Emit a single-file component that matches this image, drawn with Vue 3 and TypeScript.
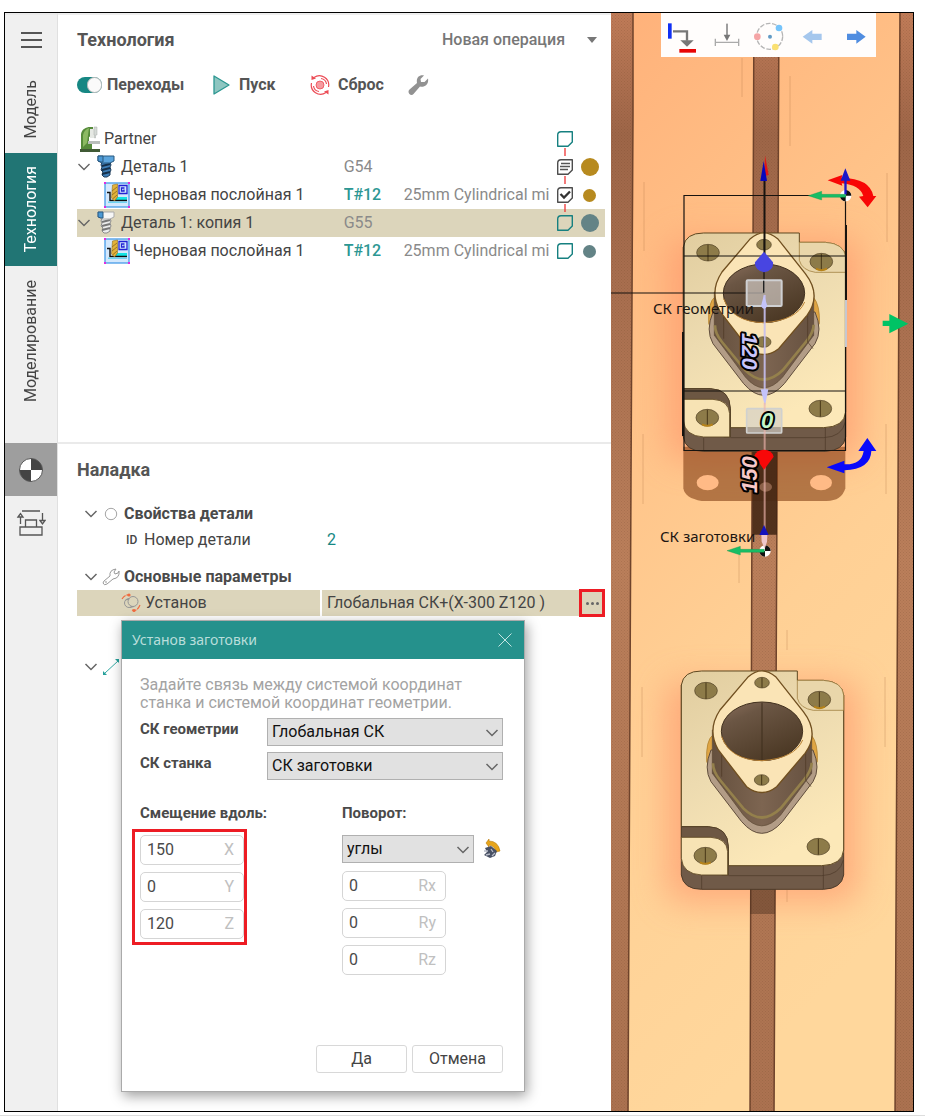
<script setup lang="ts">
import { ref } from 'vue'

type PartKind = 'machine' | 'bolt' | 'boltGhost' | 'mill'
type Mark = 'empty' | 'lines' | 'check'

interface TreeRow {
  id: number
  level: number
  icon: PartKind
  name: string
  code: string
  tool: string
  mark: Mark
  up: boolean
  down: boolean
  dot: string
  selected: boolean
}

const rows: TreeRow[] = [
  { id: 1, level: 0, icon: 'machine', name: 'Partner', code: '', tool: '', mark: 'empty', up: false, down: true, dot: '', selected: false },
  { id: 2, level: 1, icon: 'bolt', name: 'Деталь 1', code: 'G54', tool: '', mark: 'lines', up: true, down: true, dot: 'big gold', selected: false },
  { id: 3, level: 2, icon: 'mill', name: 'Черновая послойная 1', code: 'T#12', tool: '25mm Cylindrical mi', mark: 'check', up: true, down: true, dot: 'gold', selected: false },
  { id: 4, level: 1, icon: 'boltGhost', name: 'Деталь 1: копия 1', code: 'G55', tool: '', mark: 'empty', up: true, down: false, dot: 'big slate', selected: true },
  { id: 5, level: 2, icon: 'mill', name: 'Черновая послойная 1', code: 'T#12', tool: '25mm Cylindrical mi', mark: 'empty', up: false, down: false, dot: 'slate', selected: false },
]

const shifts = ref([
  { axis: 'X', value: '150' },
  { axis: 'Y', value: '0' },
  { axis: 'Z', value: '120' },
])
const turns = ref([
  { axis: 'Rx', value: '0' },
  { axis: 'Ry', value: '0' },
  { axis: 'Rz', value: '0' },
])
const geometryCs = ref('Глобальная СК')
const machineCs = ref('СК заготовки')
const turnMode = ref('углы')
const transitions = ref(true)
</script>

<template>
  <div class="page">
    <main class="frame">
      <nav class="rail">
        <div class="rail-top">
          <button class="menu" type="button" aria-label="Меню"><i></i><i></i><i></i></button>
          <button class="tab tab-model" type="button"><span>Модель</span></button>
          <button class="tab tab-tech" type="button"><span>Технология</span></button>
          <button class="tab tab-sim" type="button"><span>Моделирование</span></button>
        </div>
        <div class="rail-bottom">
          <button class="rail-icon active" type="button" aria-label="Наладка">
            <svg width="26" height="26" viewBox="0 0 26 26">
              <circle cx="13" cy="13" r="11.5" fill="#fff" />
              <path d="M13 13V1.500A11.500 11.500 0 0 1 24.500 13ZM13 13V24.500A11.500 11.500 0 0 1 1.500 13Z" fill="#444" />
              <circle cx="13" cy="13" r="11.500" fill="none" stroke="#555" />
            </svg>
          </button>
          <button class="rail-icon" type="button" aria-label="Заготовка">
            <svg width="30" height="28" viewBox="0 0 30 28" fill="none" stroke="#555" stroke-width="1.300">
              <path d="M6 2H24M9.500 18V11H20.500V18M4 18H26V26H4ZM4.500 15V8M26.500 4V12" />
              <path d="M2 8L4.500 4.500L7 8ZM24 11.500L26.500 15L29 11.500Z" />
            </svg>
          </button>
        </div>
      </nav>

      <div class="panels">
        <section class="tech">
          <header class="head">
            <h1>Технология</h1>
            <button class="new-op" type="button">Новая операция <i class="caret"></i></button>
          </header>
          <div class="tools">
            <label class="tool tool-a"><input v-model="transitions" type="checkbox" class="switch" />Переходы</label>
            <button class="tool tool-b" type="button">
              <svg width="18" height="22" viewBox="0 0 18 22"><path d="M1 2L16 11L1 20Z" fill="#8ec6c1" stroke="#2c9791" stroke-width="1.300" stroke-linejoin="round" /></svg>
              Пуск
            </button>
            <button class="tool tool-c" type="button">
              <svg width="20" height="22" viewBox="0 0 20 22" fill="none" stroke="#ec4b55" stroke-width="1.200">
                <circle cx="10" cy="11" r="4" fill="#f69ba0" stroke-width=".8" />
                <path d="M4 3.500A9.300 9.300 0 0 1 18.500 13M16 18.500A9.300 9.300 0 0 1 1.500 9M3.500 12A6.500 6.500 0 0 0 9 17.500M16.500 10A6.500 6.500 0 0 0 11 4.500" />
                <path d="M1.500 1.500V6L6 4.500ZM18.500 20.500V16L14 17.500Z" fill="#ec4b55" stroke="none" />
              </svg>
              Сброс
            </button>
            <button class="tool" type="button" aria-label="Настройка">
              <svg width="22" height="22" viewBox="0 0 22 22"><path d="M2.500 15.500L10 9C9 4 12 .5 17 1.500L13.500 5L14 8L17.500 8L21 4.500C22 10 18 13.500 13 12.500L6.500 20C4 23 -.5 18.500 2.500 15.500Z" fill="#929292" /></svg>
            </button>
          </div>

          <ul class="tree">
            <li v-for="row in rows" :key="row.id" class="tree-row" :class="[`level-${row.level}`, { selected: row.selected }]">
              <div class="tree-name">
                <button v-if="row.level === 1" class="twist" type="button" aria-label="Свернуть">
                  <svg width="14" height="10" viewBox="0 0 14 10"><path d="M1.500 2L7 7.500L12.500 2" fill="none" stroke="#666" stroke-width="1.400" /></svg>
                </button>
                <svg v-if="row.icon === 'machine'" class="ico-machine" width="20" height="26" viewBox="0 0 20 26">
                  <path d="M1 23V8C2 3 6 1 10 1H13V9L9 11V17H12V23Z" fill="#568b3b" />
                  <path d="M3 21V9C4 5 6 3 9 2L8 9L7 17Z" fill="#8cba63" />
                  <path d="M10 3H14V12H10Z" fill="#e6e9e4" /><path d="M14 1H17V9H15.500V12H14.500V9H14Z" fill="#d5dad6" stroke="#a8aeaa" stroke-width=".5" />
                  <path d="M8 15H20V18H8Z" fill="#b9bebb" />
                  <path d="M0 23H20V26H0Z" fill="#405a35" />
                </svg>
                <svg v-else-if="row.icon === 'mill'" class="ico-mill" width="26" height="26" viewBox="0 0 26 26">
                  <rect x="1" y="1" width="24" height="24" fill="#d3e8fd" stroke="#459be8" stroke-width="1.300" />
                  <path d="M10 15H23V19H10Z" fill="#14e4e4" />
                  <path d="M3 10.500H6V18.500H23" fill="none" stroke="#111" stroke-width="1.400" /><path d="M4 19.500H23V21H4Z" fill="#6fd4f2" />
                  <path d="M8.500 3L13.500 2V15L10.500 19L7.500 16Z" fill="#e3b23a" stroke="#94701f" stroke-width=".6" />
                  <path d="M8 9L13 5M8 13L13 9M8.500 17L13 13" stroke="#9a7424" />
                  <path d="M20 7.500V9H17.500V6H20.500M15 3.500H23V11.500H15Z" fill="none" stroke="#2222d4" stroke-width="1.300" />
                  <path d="M0 0H2V2H0ZM24 0H26V2H24ZM0 24H2V26H0ZM24 24H26V26H24Z" fill="#e02be0" />
                </svg>
                <svg v-else class="ico-bolt" :class="row.icon" width="18" height="24" viewBox="0 0 18 24">
                  <path class="shank" d="M5 7H13L14 10L13 12L14 15L13 17V20L10 22L7 22L5 20L6 17L4 15L5 12L4 10Z" />
                  <path class="thread" d="M5 11L13 9M5 15L13 13M5 19L13 17" />
                  <path class="cap" d="M1 1H17V6L13 8H5L1 6Z" />
                  <path class="side" d="M1 1H6V7H4L1 6Z" />
                </svg>
                <span>{{ row.name }}</span>
              </div>
              <span class="code" :class="{ tcode: row.level === 2 }">{{ row.code }}</span>
              <span class="toolname">{{ row.tool }}</span>
              <svg class="mark" width="18" height="28" viewBox="0 0 18 28" fill="none">
                <path v-if="row.up" d="M9 0V3" stroke="#e33" stroke-width="1.300" />
                <path v-if="row.down" d="M9 23V28" stroke="#e33" stroke-width="1.300" />
                <path d="M5 6.700H16.300V17L12 21.300H1.700V10Q1.700 6.700 5 6.700Z" :stroke="row.mark === 'empty' ? '#168080' : '#4d4d4d'" stroke-width="1.400" stroke-linejoin="round" />
                <path v-if="row.mark === 'lines'" d="M5 10.500H14M4 13.500H14M4 16.500H12" stroke="#555" stroke-width="1.300" />
                <path v-if="row.mark === 'check'" d="M4.500 13L8 16.500L14 10.500" stroke="#333" stroke-width="2.300" />
              </svg>
              <span class="dot-cell"><i v-if="row.dot" class="dot" :class="row.dot"></i></span>
            </li>
          </ul>
        </section>

        <section class="setup">
          <h2>Наладка</h2>
          <div class="props">
            <div class="prop group">
              <svg class="chev" width="14" height="10" viewBox="0 0 14 10"><path d="M1.500 2L7 7.500L12.500 2" /></svg>
              <svg class="pic" width="18" height="18" viewBox="0 0 18 18"><circle cx="9" cy="9" r="5.700" fill="none" stroke="#a5a5a5" /></svg>
              <span>Свойства детали</span>
            </div>
            <div class="prop item">
              <small>ID</small><span class="prop-name">Номер детали</span><span class="prop-value teal">2</span>
            </div>
            <div class="prop group second">
              <svg class="chev" width="14" height="10" viewBox="0 0 14 10"><path d="M1.500 2L7 7.500L12.500 2" /></svg>
              <svg class="pic" width="18" height="18" viewBox="0 0 18 18"><path d="M2 13L8 8Q7 2 14 1L12 4L13 6L16 5L17 3Q18 10 11 11L5 16Q2 18 1 15ZM4 13V15" fill="none" stroke="#999" /></svg>
              <span>Основные параметры</span>
            </div>
            <div class="prop item chosen">
              <svg class="ico-set" width="20" height="20" viewBox="0 0 20 20" fill="none">
                <circle cx="8" cy="10" r="4.500" stroke="#969696" /><circle cx="12" cy="8.500" r="5" stroke="#969696" fill="#dcd5bb" />
                <path d="M8.500 6L4.500 7M13 13.500L9 14.500" stroke="#969696" />
                <path d="M1 6Q4 1 9 2M19 12Q16 19 11 17" stroke="#f06a3f" stroke-width="1.200" stroke-dasharray="5 1" /><circle cx="8" cy="2" r="1.600" fill="#f06a3f" /><circle cx="13" cy="17.500" r="1.600" fill="#f06a3f" />
              </svg>
              <span class="prop-name">Установ</span>
              <span class="prop-value split">Глобальная СК+(X-300 Z120 )</span>
              <button class="more" type="button" aria-label="Изменить установ"><i></i><i></i><i></i></button>
            </div>
            <div class="prop group third">
              <svg class="chev" width="14" height="10" viewBox="0 0 14 10"><path d="M1.500 2L7 7.500L12.500 2" /></svg>
              <svg class="pic" width="18" height="18" viewBox="0 0 18 18"><path d="M3 15L16 3" stroke="#35aaa4" /><path d="M1 13L5 17L1 17ZM13 1H17V5Z" fill="#25a09a" /></svg>
            </div>
          </div>

          <form class="dialog" role="dialog" aria-labelledby="dialog-title" @submit.prevent>
            <div class="dialog-head">
              <span id="dialog-title">Установ заготовки</span>
              <button type="button" aria-label="Закрыть"><svg width="14" height="14" viewBox="0 0 14 14"><path d="M.5 .5L13.500 13.500M13.500 .5L.5 13.500" stroke="#c4e4e2" /></svg></button>
            </div>
            <div class="dialog-body">
              <p>Задайте связь между системой координат станка и системой координат геометрии.</p>
              <div class="pick">
                <label for="cs-geometry">СК геометрии</label>
                <span class="select"><select id="cs-geometry" v-model="geometryCs"><option>Глобальная СК</option></select><svg class="chev" width="14" height="10" viewBox="0 0 14 10"><path d="M1.500 2L7 7.500L12.500 2" /></svg></span>
              </div>
              <div class="pick">
                <label for="cs-machine">СК станка</label>
                <span class="select"><select id="cs-machine" v-model="machineCs"><option>СК заготовки</option></select><svg class="chev" width="14" height="10" viewBox="0 0 14 10"><path d="M1.500 2L7 7.500L12.500 2" /></svg></span>
              </div>
              <div class="columns">
                <fieldset class="shift">
                  <legend>Смещение вдоль:</legend>
                  <div class="outlined">
                    <label v-for="s in shifts" :key="s.axis" class="field"><input v-model="s.value" type="text" /><span>{{ s.axis }}</span></label>
                  </div>
                </fieldset>
                <fieldset>
                  <legend>Поворот:</legend>
                  <div class="turns">
                    <div class="turn-mode">
                      <span class="select"><select v-model="turnMode" aria-label="Поворот"><option>углы</option></select><svg class="chev" width="14" height="10" viewBox="0 0 14 10"><path d="M1.500 2L7 7.500L12.500 2" /></svg></span>
                      <svg width="18" height="20" viewBox="0 0 18 20">
                        <path d="M3 4L6 0V2Q15 2 17 12L13 13Q12 7 6 6V8Z" fill="#e7a51a" stroke="#b87a0a" stroke-width=".6" />
                        <path d="M2 9L8 7L14 12L12 17L7 19L1 16L4 13Z" fill="#485064" />
                        <path d="M1 12H5M8 10L10 13M3 16L7 15M9 17L12 14" stroke="#b8bcc8" stroke-width="1.300" />
                      </svg>
                    </div>
                    <label v-for="t in turns" :key="t.axis" class="field"><input v-model="t.value" type="text" /><span>{{ t.axis }}</span></label>
                  </div>
                </fieldset>
              </div>
              <div class="actions"><button type="submit">Да</button><button type="button">Отмена</button></div>
            </div>
          </form>
        </section>
      </div>

      <section class="view" aria-label="Рабочая зона">
        <svg class="scene" viewBox="611 13 302 1098" preserveAspectRatio="xMidYMid slice">
          <defs>
            <linearGradient id="table" x1="0" y1="0" x2=".3" y2="1">
              <stop offset="0" stop-color="#ffb079" /><stop offset=".35" stop-color="#ffc288" /><stop offset=".65" stop-color="#ffd095" /><stop offset="1" stop-color="#ffd79c" />
            </linearGradient>
            <linearGradient id="groove" x1="0" y1="0" x2="0" y2="1">
              <stop offset="0" stop-color="#c47e5a" /><stop offset=".12" stop-color="#9e6648" /><stop offset=".5" stop-color="#bb7f5b" /><stop offset="1" stop-color="#ab7250" />
            </linearGradient>
            <linearGradient id="plate" x1="0" y1="0" x2=".5" y2="1">
              <stop offset="0" stop-color="#e1cd9f" /><stop offset=".5" stop-color="#eddbb0" /><stop offset="1" stop-color="#fce8b8" />
            </linearGradient>
            <linearGradient id="bore" x1="0" y1="0" x2=".6" y2="1">
              <stop offset="0" stop-color="#8b6f5c" /><stop offset=".3" stop-color="#6b5644" /><stop offset="1" stop-color="#4c3925" />
            </linearGradient>
            <linearGradient id="skirt" x1="0" y1="0" x2="1" y2="0">
              <stop offset="0" stop-color="#65503e" /><stop offset=".5" stop-color="#7d6551" /><stop offset="1" stop-color="#665140" />
            </linearGradient>
            <pattern id="grain" width="3" height="3" patternUnits="userSpaceOnUse"><path d="M0 0H1V1H0ZM1.500 1.500H2.500V2.500H1.500Z" fill="#5a2f1c" opacity=".16" /></pattern>
            <filter id="glow" x="-40%" y="-30%" width="180%" height="160%"><feGaussianBlur stdDeviation="17" /></filter>
            <g id="part">
              <path d="M229 165V735Q235 778 290 778H655Q710 776 716 735V195Z" fill="#705a48" stroke="#4e3b29" stroke-width="3" />
              <path d="M290 738V778M655 707V778M370 737H650Q705 735 715 690" fill="none" stroke="#4b3827" stroke-width="2" />
              <path d="M229 590V165Q235 123 290 123H577V151H655Q712 155 716 195V660Q712 705 650 707H370V650Q368 592 310 590Z" fill="url(#plate)" stroke="#5d461f" stroke-width="3" />
              <path d="M577 151H655Q712 155 716 195V241H625Q585 235 577 205Z" fill="#e9d6aa" stroke="#93702e" stroke-width="2" />
              <path d="M229 590H310Q370 592 370 650V735H350V640L229 625Z" fill="#6d5743" stroke="#49371f" stroke-width="2" />
              <path d="M229 622H318Q365 625 368 665V735H290Q233 732 229 685Z" fill="#f7e3b4" stroke="#5d461f" stroke-width="2.500" />
              <path d="M324 315Q302 330 305 395L318 420M619 315Q640 340 637 395L620 420" fill="#dfa544" stroke="#a87722" stroke-width="2" />
              <path d="M318 360Q295 415 318 455L410 575Q470 645 532 575L624 455Q648 415 624 360Z" fill="#b29c86" stroke="#604d3b" stroke-width="3" />
              <path d="M322 300V430L415 555Q470 620 527 555L620 430V300Z" fill="url(#skirt)" stroke="#594530" stroke-width="2" />
              <path d="M324 400Q324 425 345 450L415 535Q470 590 527 535L598 448Q620 420 620 398" fill="none" stroke="#94804c" stroke-width="8" />
              <path d="M602 360V450L618 470M350 370V440" fill="none" stroke="#4b3722" stroke-width="2" />
              <path d="M430 140Q470 105 512 140L595 245Q645 310 600 370L515 470Q470 505 425 470L340 360Q305 300 345 240Z" fill="#fae4b6" stroke="#704f20" stroke-width="4" />
              <ellipse cx="471" cy="304" rx="122" ry="88" fill="url(#bore)" stroke="#402f1d" stroke-width="3" />
              <path d="M350 320Q375 390 471 392Q570 385 593 330" fill="none" stroke="#b98235" stroke-width="3" />
              <g fill="#8d7b49" stroke="#514125" stroke-width="2">
                <ellipse cx="471" cy="158" rx="22" ry="16" /><ellipse cx="470" cy="450" rx="22" ry="16" />
                <ellipse cx="303" cy="182" rx="34" ry="25" /><ellipse cx="643" cy="209" rx="34" ry="25" />
                <ellipse cx="640" cy="650" rx="34" ry="25" /><ellipse cx="301" cy="677" rx="34" ry="25" />
              </g>
              <path d="M303 158V207M643 185V233M640 626V674M301 653V701M471 143V173M470 435V465" stroke="#473718" stroke-width="3" />
              <path d="M627 230Q643 239 660 230M285 697Q301 706 317 697" fill="none" stroke="#b78319" stroke-width="6" />
            </g>
            <g id="origin">
              <circle r="17" fill="#fff" /><path d="M0 0V-17A17 17 0 0 1 17 0ZM0 0V17A17 17 0 0 1 -17 0Z" fill="#111" />
            </g>
            <g id="green-arrow"><path d="M-112 0L-72 -13V-4H0V5H-72V13Z" fill="#18bd65" stroke="#0a9249" stroke-width="1" /></g>
          </defs>
          <rect x="600" y="0" width="330" height="1120" fill="url(#table)" />
          <g filter="url(#glow)" fill="#ff9068" opacity=".6">
            <rect x="668" y="240" width="192" height="220" rx="14" /><rect x="666" y="682" width="192" height="220" rx="14" />
          </g>
          <g stroke="#6f432b" stroke-width="1.500">
            <path d="M600 0H633V115L631 480L628 1120H600Z" fill="url(#groove)" />
            <path d="M754 0H779L777 500L774 1120H750L752 500Z" fill="url(#groove)" />
            <path d="M900 0H930V1120H895L898 500Z" fill="url(#groove)" />
          </g>
          <path d="M600 0H633L628 1120H600ZM754 0H779L774 1120H750ZM900 0H930V1120H895Z" fill="url(#grain)" />
          <path d="M742 58V97M790 76V146M887 173V242M644 182V251M643 434V504M886 424V494M642 687V757M885 677V747M787 630V650M787 890V902M739 555V583" stroke="#b57a4b" stroke-width="1" opacity=".35" />
          <g transform="translate(605 380) scale(.33333)">
            <path d="M235 200H721V325Q710 363 665 363H290Q240 355 235 325Z" fill="#7c390f" opacity=".58" />
            <path d="M442 205H516V464H442Z" fill="#432715" opacity=".88" />
            <ellipse cx="308" cy="308" rx="33" ry="23" fill="#ffba86" /><ellipse cx="648" cy="308" rx="33" ry="23" fill="#ffba86" /><ellipse cx="482" cy="321" rx="19" ry="14" fill="#8b6048" />
          </g>
          <path d="M750 889H775V914H750Z" fill="#4b3120" opacity=".45" />
          <use href="#part" transform="translate(605 630) scale(.33333)" />
          <path d="M762 703V760" stroke="#3f2e1c" />
          <use href="#part" transform="translate(607 192) scale(.33333)" />

          <g fill="none" stroke="#17130f">
            <path d="M684 195.500H845.500V450.500H684ZM684 256H845M684 391H845M611 293H764V256" stroke-width="1.200" />
            <path d="M764.500 180V256M846 225V300M683 332V436" stroke-width="2" />
            <path d="M846 300V347" stroke="#c7c7cf" stroke-width="2" />
          </g>
          <g transform="translate(605 0) scale(.33333)">
            <path d="M480 466L491 525L478 528Z" fill="#e21616" /><path d="M476 483L486 543H466Z" fill="#0808bd" />
            <path d="M668 541L712 525L710 533Q795 535 805 588H814L788 622L762 590L775 588Q765 555 710 550L712 557Z" fill="#f80606" />
            <use href="#origin" transform="translate(722 587)" /><use href="#green-arrow" transform="translate(722 587)" />
            <path d="M721 505L736 542H725V583H718V542H707Z" fill="#1b18c9" />
          </g>
          <g transform="translate(605 220) scale(.33333)">
            <rect x="425" y="181" width="105" height="77" rx="3" fill="#e5dfdc" fill-opacity=".6" stroke="#cfd0d2" stroke-width="6" />
            <path d="M476 182V218" stroke="#222" stroke-width="4" />
            <path d="M479 225V510" stroke="#c6bff0" stroke-width="6" opacity=".9" /><path d="M477 224L487 258Q477 275 468 258ZM467 508H490L480 558Z" fill="#c4c3fa" />
            <path d="M477 95L504 127Q507 151 477 157Q448 151 450 127Z" fill="#4845e1" />
            <path d="M833 302H853V282L910 311L853 340V318H833Z" fill="#00c365" />
          </g>
          <g transform="translate(605 380) scale(.33333)">
            <rect x="425" y="86" width="105" height="73" rx="3" fill="#d3d0c8" fill-opacity=".65" stroke="#d0d1cf" stroke-width="5" />
            <path d="M479 68V485" stroke="#edb4ad" stroke-width="6" opacity=".65" />
            <path d="M448 227Q455 209 477 209Q500 209 506 230L477 269Z" fill="#f80808" />
            <path d="M665 262L718 242V253Q770 255 776 213H760L787 174L814 213H799Q797 268 718 271V280Z" fill="#0909fb" />
            <use href="#origin" transform="translate(480 513)" /><use href="#green-arrow" transform="translate(478 512)" />
            <path d="M477 435L491 465H463Z" fill="#1512bd" /><path d="M469 465H487L486 485L479 507L470 485Z" fill="#efc7cb" />
          </g>
          <text class="cs" x="653" y="314">СК геометрии</text>
          <text class="cs" x="660" y="542">СК заготовки</text>
          <text class="dim violet" transform="translate(742 333) rotate(90)">120</text>
          <text class="dim pink" transform="translate(757 493) rotate(-90)">150</text>
          <text class="dim mint" x="761" y="428">0</text>
        </svg>

        <div class="view-tools">
          <button type="button" aria-label="Сместить"><svg viewBox="168 39 129 132"><path d="M189 70H200V116H189Z" fill="#1030f4" /><path d="M204 94H246V122" fill="none" stroke="#777" stroke-width="7" /><path d="M226 121H266L246 140Z" fill="#777" /><path d="M223 147H273V158H223Z" fill="#e80505" /></svg></button>
          <button type="button" aria-label="На плоскость"><svg viewBox="297 39 129 132"><path d="M366 71V110M331 127H401M331 116V138M401 116V138" stroke="#aaa" stroke-width="4" fill="none" /><path d="M366 71V108" stroke="#777" stroke-width="3" /><path d="M356 104H376L366 123Z" fill="#777" /></svg></button>
          <button type="button" aria-label="По окружности"><svg viewBox="426 39 129 132"><circle cx="494" cy="109" r="39" fill="none" stroke="#b5b5b5" stroke-width="4" stroke-dasharray="14 5" /><circle cx="495" cy="110" r="6" fill="#629bc5" /><circle cx="522" cy="84" r="10" fill="#76c4fa" /><circle cx="457" cy="110" r="10" fill="#f5a5a6" /><circle cx="511" cy="141" r="10" fill="#fae071" /></svg></button>
          <button type="button" aria-label="Назад"><svg viewBox="555 39 129 132"><path d="M593 110L622 90V101H650V120H622V131Z" fill="#a5c7ed" /></svg></button>
          <button type="button" aria-label="Вперёд"><svg viewBox="684 39 129 132"><path d="M782 110L754 90V101H726V120H754V131Z" fill="#508de0" /></svg></button>
        </div>
      </section>
    </main>
    <hr class="rule" />
  </div>
</template>

<style>
body {
  background: #fff;
}
</style>

<style scoped>
.page {
  min-height: 100vh;
  box-sizing: border-box;
  padding: 12px 0 3px;
  display: flex;
  flex-direction: column;
  font: 16px/20px Roboto, "Liberation Sans", sans-serif;
  color: #444;
}
.page *,
.page *::before {
  box-sizing: border-box;
}
button,
input,
select {
  font: inherit;
  color: inherit;
}
button {
  padding: 0;
  border: 0;
  background: none;
}
svg {
  display: block;
  flex: none;
}
.rule {
  width: 100%;
  height: 1px;
  margin: 3px 0 0;
  border: 0;
  background: #ddd;
}
.frame {
  flex: 1;
  margin: 0 11px 0 4px;
  border: 1px solid #000;
  display: grid;
  grid-template-columns: 53px minmax(0, 553fr) minmax(0, 302fr);
}
.rail,
.panels {
  display: grid;
  grid-template-rows: 429fr 669fr;
}
.rail {
  background: #f0f0f0;
  border-right: 1px solid #e0e0e0;
  border-top: 2px solid #eaeaea;
}
.rail-top,
.rail-bottom {
  display: flex;
  flex-direction: column;
}
.menu {
  height: 51px;
  padding: 0 0 2px 16px;
  display: flex;
  flex-direction: column;
  justify-content: center;
  gap: 5px;
}
.menu i {
  width: 21px;
  height: 2px;
  background: #555;
}
.tab {
  display: flex;
  align-items: center;
  justify-content: center;
}
.tab span {
  writing-mode: vertical-rl;
  transform: rotate(180deg);
}
.tab-model {
  height: 87px;
}
.tab-tech {
  height: 113px;
  background: #217574;
  color: #fff;
}
.tab-sim {
  height: 151px;
}
.rail-icon {
  height: 53px;
  display: grid;
  place-items: center;
}
.rail-icon.active {
  background: #9e9e9e;
}
.panels {
  background: #fff;
}
.tech {
  padding: 0 6px 0 19px;
  border-top: 2px solid #eee;
}
.setup {
  position: relative;
  border-top: 2px solid #eaeaea;
  padding: 0 6px 0 19px;
}
h1,
h2 {
  margin: 0;
  font-size: 18px;
  line-height: 24px;
  font-weight: 700;
  color: #555;
}
.head {
  display: flex;
  align-items: center;
  justify-content: space-between;
  padding-top: 13px;
}
.new-op {
  display: flex;
  align-items: center;
  gap: 22px;
  padding-right: 8px;
  font-weight: 500;
  color: #777;
}
.caret {
  border: 5px solid transparent;
  border-top: 6px solid #777;
  border-bottom: 0;
}
.tools {
  display: flex;
  align-items: center;
  height: 24px;
  margin-top: 21px;
  font-weight: 700;
  color: #555;
}
.tool {
  display: flex;
  align-items: center;
  gap: 8px;
}
.tool-a {
  gap: 5px;
  width: 136px;
}
.tool-b {
  width: 97px;
}
.tool-c {
  width: 97px;
}
.switch {
  appearance: none;
  width: 25px;
  height: 16px;
  margin: 0;
  border-radius: 8px;
  background: #168783;
  display: flex;
  justify-content: flex-end;
}
.switch::before {
  content: "";
  width: 15px;
  height: 16px;
  border-radius: 8px;
  background: #fafafa;
  border: 1px solid #bbb;
}
.tree {
  list-style: none;
  margin: 28px 0 0;
  padding: 0;
}
.tree-row {
  height: 28px;
  display: grid;
  grid-template-columns: minmax(0, 266fr) 60px minmax(0, 152fr) 19px 30px;
  align-items: center;
  white-space: nowrap;
}
.tree-row.selected {
  background: #dcd5bb;
}
.tree-name {
  display: flex;
  align-items: center;
  gap: 4px;
}
.level-2 .tree-name {
  padding-left: 27px;
  gap: 3px;
}
.twist {
  width: 14px;
}
.ico-machine {
  margin-left: 3px;
}
.ico-bolt {
  margin: 0 2px;
}
.bolt .shank {
  fill: #3f7fb8;
  stroke: #1f3d5a;
}
.bolt .thread {
  stroke: #16304a;
  stroke-width: 2;
}
.bolt .cap {
  fill: #5ba4dc;
  stroke: #29587f;
}
.boltGhost .shank {
  fill: #ececec;
  stroke: #8c8c8c;
}
.boltGhost .thread {
  stroke: #777;
  stroke-width: 2;
}
.boltGhost .cap {
  fill: #f6f6f6;
  stroke: #aaa;
}
.side {
  fill: #4b98d4;
  stroke: #29587f;
}
.code,
.toolname {
  color: #8a8a8a;
  overflow: hidden;
}
.tcode {
  color: #2c9793;
  font-weight: 500;
}
.dot-cell {
  display: grid;
  place-items: center;
}
.dot {
  width: 13px;
  height: 13px;
  border-radius: 50%;
}
.dot.big {
  width: 18px;
  height: 18px;
}
.gold {
  background: #b78a1f;
}
.slate {
  background: #638386;
}
.setup h2 {
  padding-top: 14px;
}
.props {
  padding-top: 19px;
}
.prop {
  height: 26px;
  display: flex;
  align-items: center;
  white-space: nowrap;
}
.group {
  padding-left: 7px;
  font-weight: 700;
  color: #4a4a4a;
}
.chev path {
  fill: none;
  stroke: #666;
  stroke-width: 1.5;
}
.group .pic {
  margin: 0 4px;
}
.item small {
  padding-left: 49px;
  width: 67px;
  font-size: 12px;
  font-weight: 500;
}
.prop-name {
  width: 175px;
}
.prop-value {
  padding-left: 8px;
}
.teal {
  color: #168783;
}
.second {
  margin-top: 11px;
}
.chosen {
  background: #dcd5bb;
}
.ico-set {
  margin: 0 4px 0 44px;
}
.split {
  flex: 1;
  border-left: 2px solid #fff;
  padding-left: 5px;
  line-height: 26px;
}
.more {
  width: 26px;
  height: 28px;
  border: 3px solid #ed1c24;
  display: flex;
  align-items: center;
  justify-content: center;
  gap: 2px;
}
.more i {
  width: 3px;
  height: 3px;
  border-radius: 50%;
  background: #666;
}
.third {
  margin-top: 38px;
}
.dialog {
  position: absolute;
  top: 176px;
  left: 63px;
  width: 404px;
  background: #fff;
  border: 1px solid #aaa;
  box-shadow: 2px 4px 12px rgba(0, 0, 0, 0.38);
}
.dialog-head {
  height: 38px;
  padding: 0 12px 0 10px;
  background: #25918c;
  color: #b9dedb;
  font: 14px/20px "Noto Sans", "Open Sans", sans-serif;
  display: flex;
  align-items: center;
  justify-content: space-between;
}
.dialog-body {
  padding: 17px 21px 18px 18px;
}
.dialog p {
  width: 330px;
  margin: 0 0 6px;
  line-height: 18px;
  color: #a3a3a3;
}
.pick {
  display: grid;
  grid-template-columns: 127px 1fr;
  margin-bottom: 6px;
}
.pick label,
legend {
  font-size: 15px;
  line-height: 22px;
  font-weight: 700;
  color: #4a4a4a;
}
.select {
  position: relative;
  display: block;
}
.select select {
  appearance: none;
  width: 100%;
  height: 28px;
  padding: 0 24px 0 4px;
  border: 1px solid #b0b0b0;
  border-radius: 0;
  background: #e1e1e1;
  color: #111;
}
.select .chev {
  position: absolute;
  right: 4px;
  top: 10px;
  pointer-events: none;
}
.columns {
  display: grid;
  grid-template-columns: 202px 1fr;
  padding-top: 16px;
}
fieldset {
  min-width: 0;
  margin: 0;
  padding: 0;
  border: 0;
}
legend {
  padding: 0;
}
.outlined {
  width: 115px;
  margin: 5px 0 0 -8px;
  padding: 3px 2px 3px 5px;
  border: 3px solid #ed1c24;
  display: grid;
  gap: 7px;
}
.field {
  width: 104px;
  height: 30px;
  padding: 0 9px 0 6px;
  border: 1px solid #d5d5d5;
  border-radius: 5px;
  display: flex;
  align-items: center;
  color: #c0c0c0;
}
.field input {
  flex: 1;
  min-width: 0;
  padding: 0;
  border: 0;
  background: none;
  outline: 0;
  color: #4a4a4a;
}
.turns {
  display: grid;
  gap: 7px;
  padding-top: 10px;
}
.turn-mode {
  display: flex;
  align-items: center;
  gap: 9px;
  height: 30px;
}
.turn-mode .select {
  width: 132px;
}
.actions {
  display: flex;
  justify-content: flex-end;
  gap: 5px;
  margin-top: 70px;
}
.actions button {
  width: 91px;
  height: 28px;
  border: 1px solid #d8d8d8;
  border-radius: 3px;
}
.view {
  position: relative;
  overflow: hidden;
}
.scene {
  position: absolute;
  inset: 0;
  width: 100%;
  height: 100%;
}
.cs {
  font: 15px "Noto Sans", "Open Sans", sans-serif;
  fill: #1d1612;
}
.dim {
  font: italic 700 22px "Liberation Sans", sans-serif;
  stroke: #000;
  stroke-width: 4px;
  paint-order: stroke;
  stroke-linejoin: round;
}
.violet {
  fill: #c7c4fa;
}
.pink {
  fill: #f7c8c8;
}
.mint {
  fill: #c4f7c8;
}
.view-tools {
  position: absolute;
  top: 0;
  left: 50px;
  display: grid;
  grid-template-columns: repeat(5, 43px);
  height: 44px;
  background: #fffdfc;
}
.view-tools svg {
  width: 43px;
  height: 44px;
}
</style>
